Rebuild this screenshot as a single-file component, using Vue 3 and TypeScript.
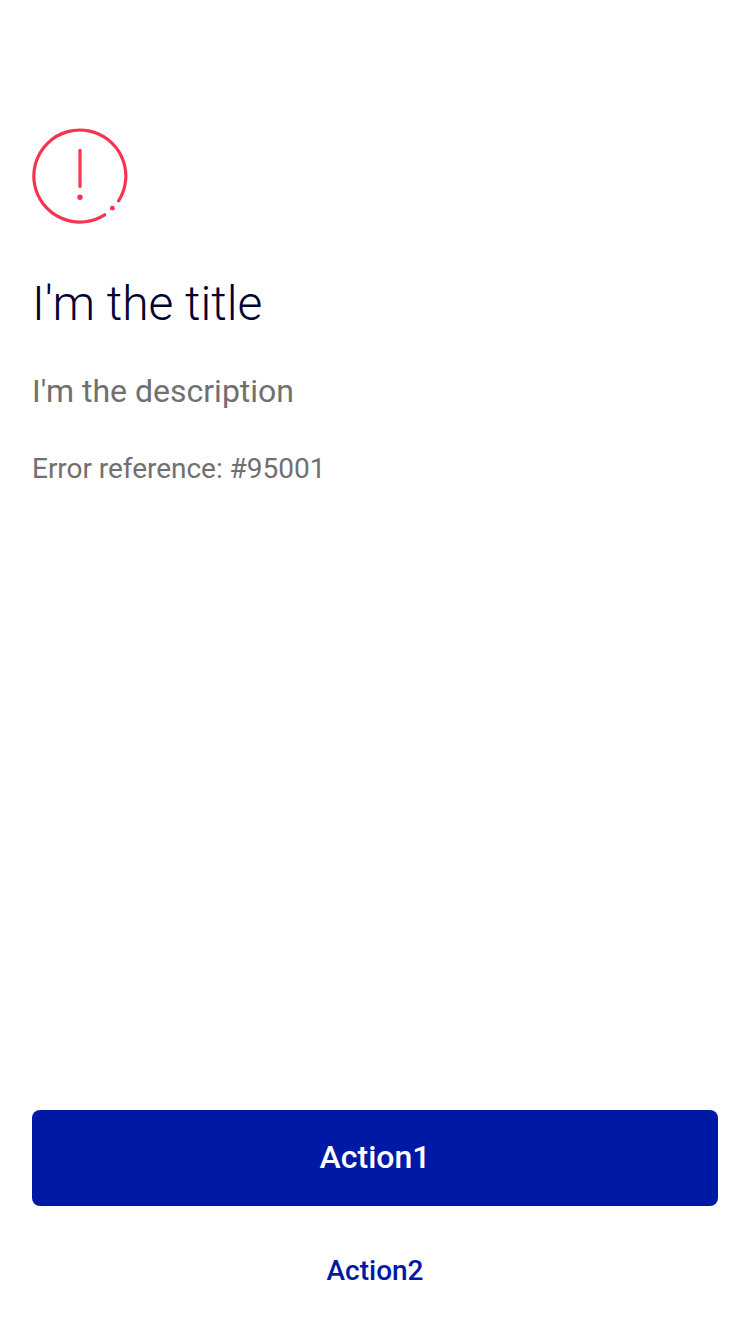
<script setup lang="ts">
const title: string = "I'm the title"
const description: string = "I'm the description"
const reference: string = 'Error reference: #95001'
</script>

<template>
  <main class="screen">
    <section class="content">
      <svg class="icon" viewBox="0 0 96 96" fill="none" aria-hidden="true">
        <path d="M72.6 86.8A46 46 0 1 1 86.6 72.8" stroke="#f6344c" stroke-width="3.2" stroke-linecap="round" />
        <path d="M48 22.3V58.5" stroke="#f6344c" stroke-width="3.2" stroke-linecap="round" />
        <circle cx="48" cy="69.3" r="2.7" fill="#f6344c" />
        <circle cx="80.4" cy="80.2" r="2.4" fill="#f6344c" />
      </svg>
      <h1 class="title">{{ title }}</h1>
      <p class="description">{{ description }}</p>
      <p class="reference">{{ reference }}</p>
    </section>
    <footer class="actions">
      <button class="primary" type="button">Action1</button>
      <button class="link" type="button">Action2</button>
    </footer>
  </main>
</template>

<style>
body {
  margin: 0;
  background: #fff;
}
</style>

<style scoped>
.screen {
  box-sizing: border-box;
  height: 1334px;
  padding: 128px 32px 16px;
  display: flex;
  flex-direction: column;
  justify-content: space-between;
  font-family: Roboto, sans-serif;
  background: #fff;
}
.content {
  display: flex;
  flex-direction: column;
}
.icon {
  width: 96px;
  height: 96px;
}
.title {
  margin: 48px 0 0;
  font-size: 48px;
  line-height: 64px;
  font-weight: 300;
  color: #000033;
}
.description {
  margin: 31px 0 0;
  font-size: 32px;
  line-height: 48px;
  color: #707070;
}
.reference {
  margin: 34px 0 0;
  font-size: 28px;
  line-height: 40px;
  letter-spacing: -0.03px;
  color: #707070;
}
.actions {
  display: flex;
  flex-direction: column;
  gap: 16px;
}
button {
  height: 96px;
  padding: 0;
  border: 0;
  border-radius: 8px;
  font-family: inherit;
  font-weight: 500;
}
.primary {
  padding-bottom: 2px;
  background: #0019a5;
  color: #fff;
  font-size: 32px;
}
.link {
  background: transparent;
  color: #0019a5;
  font-size: 28px;
}
</style>
